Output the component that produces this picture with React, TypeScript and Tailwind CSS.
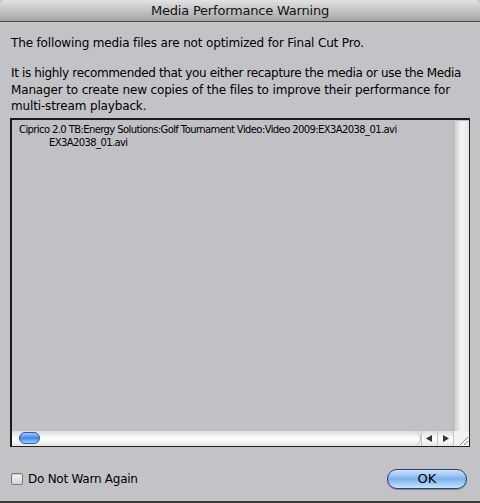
import React from 'react';

const font = { fontFamily: '"Lucida Grande", "DejaVu Sans", "Noto Sans", sans-serif' };

const App = () => {
  return (
    <div className="w-[480px] h-[503px] bg-[#c3c3c7] flex flex-col text-black overflow-hidden" style={font}>
      {/* title bar */}
      <div className="h-[22px] shrink-0 rounded-t-[5px] bg-gradient-to-b from-[#e2e2e2] via-[#c4c4c4] to-[#a4a4a4] border-b border-[#4a4a4a] flex items-center justify-center">
        <span className="text-[13px] tracking-[-0.2px] text-[#111]">Media Performance Warning</span>
      </div>

      <div className="flex-1 flex flex-col px-[10px] pt-[13px] pb-[2px]">
        <p className="text-[12px] leading-[16px] pl-[1px] tracking-[-0.15px] whitespace-nowrap">The following media files are not optimized for Final Cut Pro.</p>
        <p className="text-[12px] leading-[16.5px] mt-[14px] pl-[1px] tracking-[-0.15px] whitespace-nowrap">
          <span className="tracking-[-0.35px]">It is highly recommended that you either recapture the media or use the Media</span>
          <br />
          Manager to create new copies of the files to improve their performance for
          <br />
          multi-stream playback.
        </p>

        {/* file list */}
        <div className="mt-[3px] h-[329px] w-[460px] border-t-2 border-l-2 border-[#1c1c1c] border-r border-b border-r-[#222] border-b-[#222] flex flex-col bg-[#c1c1c5]">
          <div className="flex-1 flex">
            <div className="flex-1 pl-[7px] pt-[3px] text-[10px] leading-[13px] tracking-[-0.6px] whitespace-nowrap">
              <div>Ciprico 2.0 TB:Energy Solutions:Golf Tournament Video:Video 2009:EX3A2038_01.avi</div>
              <div className="pl-[30px]">EX3A2038_01.avi</div>
            </div>
            <div className="w-[16px] mt-[1px] bg-gradient-to-r from-[#c8c8c8] via-[#f6f6f6] to-[#e4e4e4] border-l border-[#b4b4b4]" />
          </div>
          <div className="h-[15px] flex bg-gradient-to-b from-[#dcdcdc] via-[#ffffff] to-[#e6e6e6]">
            <div className="flex-1 relative pl-[7px] flex items-center rounded-r-[8px] border-r border-[#b8b8b8]">
              <div className="w-[21px] h-[12px] rounded-full border border-[#2a5aa8] bg-gradient-to-b from-[#a8c8f4] via-[#3d86e8] to-[#9cd0ff]" />
            </div>
            <div className="w-[16px] flex items-center justify-center border-l border-[#c8c8c8]">
              <svg width="7" height="7" viewBox="0 0 7 7"><path d="M6 0 L0 3.5 L6 7 Z" fill="#333" /></svg>
            </div>
            <div className="w-[16px] flex items-center justify-center border-l border-[#c8c8c8]">
              <svg width="7" height="7" viewBox="0 0 7 7"><path d="M1 0 L7 3.5 L1 7 Z" fill="#333" /></svg>
            </div>
            <div className="w-[16px] flex items-end justify-end border-l border-[#c8c8c8] bg-[#f2f2f2]">
              <svg width="12" height="12" viewBox="0 0 12 12">
                <path d="M11 3 L3 11 M11 7 L7 11" stroke="#888" strokeWidth="1" />
              </svg>
            </div>
          </div>
        </div>

        {/* footer */}
        <div className="flex items-center justify-between mt-[22px] pl-[1px] pr-[3px]">
          <label className="flex items-center gap-[5px] text-[12px]">
            <span className="w-[12px] h-[12px] rounded-[2px] border border-[#7a7a7a] bg-gradient-to-b from-[#f4f4f4] to-[#d6d6d6] shadow-[inset_0_1px_1px_rgba(0,0,0,0.15)]" />
            <span className="tracking-[-0.25px]">Do Not Warn Again</span>
          </label>
          <button className="w-[80px] h-[20px] rounded-full border border-[#25407a] bg-gradient-to-b from-[#cfe2fb] via-[#7fb0ee] to-[#c5e6ff] text-[13px] leading-none shadow-[0_1px_1px_rgba(0,0,0,0.3)]">
            OK
          </button>
        </div>
      </div>
      <div className="h-[2px] bg-[#3a3a3a] shrink-0" />
    </div>
  );
};

export default App;
